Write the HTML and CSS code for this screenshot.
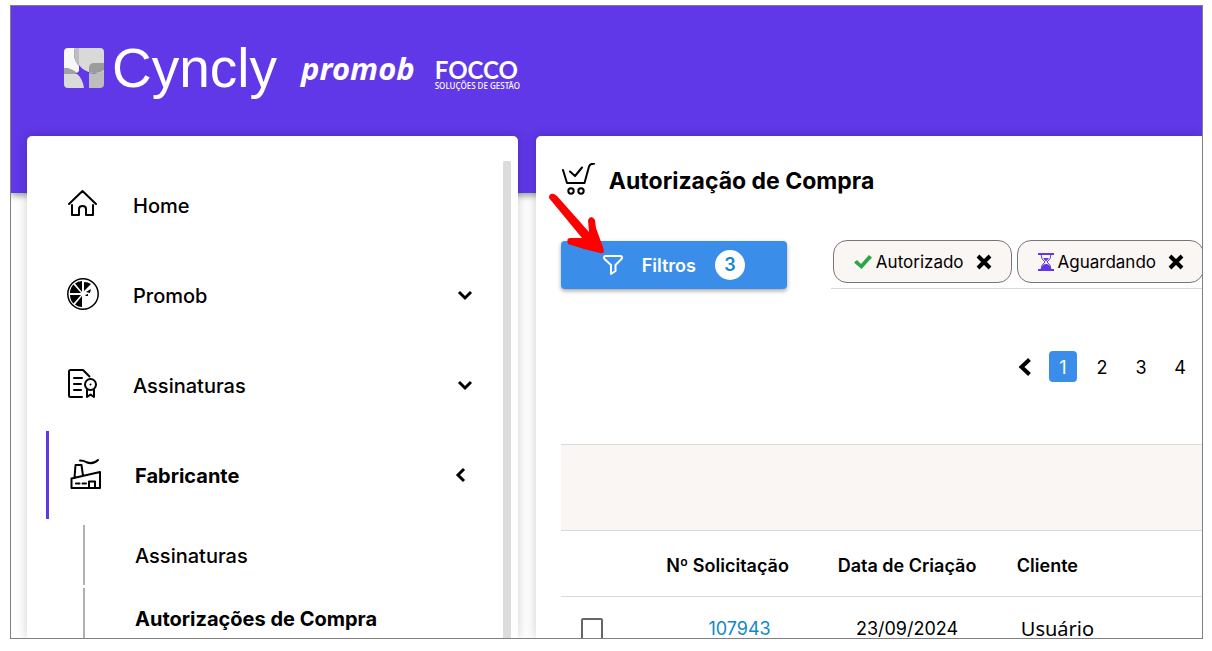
FILE: index.html
```html
<!DOCTYPE html>
<html lang="pt-BR">
<head>
  <title>Autorização de Compra</title>
  <meta charset="UTF-8">
  <link rel="stylesheet" href="styles.css">
</head>
<body>
  <div class="frame">
    <header class="header">
      <a class="brand" href="#">
        <svg class="brand-mark" viewBox="0 0 40 40" aria-hidden="true">
          <defs><clipPath id="mark"><rect width="40" height="40" rx="4"/></clipPath></defs>
          <g clip-path="url(#mark)">
            <path d="M0 0h11c-2 6-1 12 4 18v5l-2 2C9 22 5 20 0 20z" fill="#f7f7f7"/>
            <path d="M11 0h4v18C10 13 9 6 11 0z" fill="#bdbdbd"/>
            <path d="M15 0h25v25H27C21 23 17 20 15 17z" fill="#d9d9d9"/>
            <path d="M25 24v-4c0-3 2-5 5-5h10v7c-4 3-10 4-15 2z" fill="#9b9b9b"/>
            <path d="M25 25c5 1 11 0 15-2v17H25z" fill="#bdbdbd"/>
            <path d="M0 20c5 0 10 2 13 5l-2 1H0z" fill="#a3a3a3"/>
            <path d="M0 26h13c4 3 6 8 7 14H0z" fill="#dadada"/>
          </g>
        </svg>
        <span class="brand-cyncly">Cyncly</span>
      </a>
      <span class="brand-promob">promob</span>
      <span class="brand-focco">
        <span class="focco-name">FOCCO</span>
        <span class="focco-sub">SOLUÇÕES DE GESTÃO</span>
      </span>
    </header>

    <div class="content">
      <aside class="card sidebar">
        <nav class="menu">
          <a class="menu-item" href="#">
            <svg class="menu-icon" viewBox="0 0 32 32"><path d="M2 16 15.500 3 29 16M5 17v10h7v-6q0-3 3.500-3t3.500 3v6h7V17"/></svg>
            <span class="menu-label">Home</span>
          </a>
          <a class="menu-item" href="#">
            <svg class="menu-icon" viewBox="0 0 32 32">
              <circle class="thin" cx="16" cy="16" r="15.200"/>
              <g class="solid">
                <path d="M15 14V3q-4 0-7 2.500zM6.500 6.500 14 15H3q0-5 3.500-8.500zM3 17h11l-7.500 8.500Q3 22 3 17zM8 26.500 15 18v11q-4 0-7-2.500zM17 13V4q4 0 7 2zM19 14l5-3-1 4zM18 17l3-1v2h-2z"/>
              </g>
            </svg>
            <span class="menu-label">Promob</span>
            <svg class="chevron" viewBox="0 0 16 16"><path d="m2 5 6 6 6-6"/></svg>
          </a>
          <a class="menu-item" href="#">
            <svg class="menu-icon" viewBox="0 0 32 32">
              <path d="M15 29H3.500Q2 29 2 27.500v-24Q2 2 3.500 2H16l6.500 6.500M7 10h8M7 16h7M7 22h7"/>
              <circle cx="23.500" cy="16.500" r="5.500"/>
              <path d="M20 21.500V29l3.500-2.500L27 29v-7.500"/>
              <circle class="solid" cx="23.500" cy="16.500" r="1"/>
            </svg>
            <span class="menu-label">Assinaturas</span>
            <svg class="chevron" viewBox="0 0 16 16"><path d="m2 5 6 6 6-6"/></svg>
          </a>
          <a class="menu-item active" href="#">
            <svg class="menu-icon" viewBox="0 0 32 32">
              <path d="M2.500 30V20.500L31 14v16zM5.500 20l1-13h6l1.500 11M11 2.500q4 0 6 1.500 7 3 12-2M7 25.500h3.500M13.500 25.500H17M20 30v-6.500h6V30"/>
            </svg>
            <span class="menu-label">Fabricante</span>
            <svg class="chevron" viewBox="0 0 16 16"><path d="M11 2 5 8l6 6"/></svg>
          </a>
          <div class="submenu">
            <a class="submenu-item" href="#">Assinaturas</a>
            <a class="submenu-item current" href="#">Autorizações de Compra</a>
          </div>
        </nav>
        <div class="scrollbar"></div>
      </aside>

      <main class="card main">
        <div class="title">
          <svg class="title-icon" viewBox="0 0 34 34" aria-hidden="true">
            <path d="M2 7l4 13h17.500L28 3.500q.800-3 5-2.800M9 8.500l5 4.500 7-8.500"/>
            <circle cx="10" cy="28" r="2.700"/><circle cx="20" cy="28" r="2.700"/>
          </svg>
          <h1>Autorização de Compra</h1>
        </div>

        <div class="filters">
          <button class="btn-filter" type="button">
            <svg class="funnel" viewBox="0 0 20 20"><path d="M1 2.500Q1 1 2.500 1h15Q19 1 19 2.500q0 1-1 2L12.500 10v6L8 19v-9L2 4.500q-1-1-1-2z"/></svg>
            <span>Filtros</span>
            <span class="count">3</span>
            <svg class="arrow" viewBox="0 0 58 66" aria-hidden="true">
              <path d="M1 5Q1 0 6 1L9 3 41 39l-1-12q3-6 7 0l1 8 8 22q0 4-4 3l-16-4-16-5q-2-6 2-6l12 0z"/>
            </svg>
          </button>
          <div class="chips">
            <span class="chip">
              <svg class="chip-check" viewBox="0 0 18 14"><path d="M0 7.500 3 5l4 4L15 0l3 2.500L7.500 14z"/></svg>
              Autorizado
              <button class="chip-close" type="button" aria-label="Remover Autorizado"><svg viewBox="0 0 16 16"><path d="m2 2 12 12M14 2 2 14"/></svg></button>
            </span>
            <span class="chip">
              <svg class="chip-glass" viewBox="0 0 16 18"><path class="glass" d="M3 1.500q0 5 4 7.500-4 2.500-4 7.500M13 1.500q0 5-4 7.500 4 2.500 4 7.500"/><path d="M0 0h16v2H0zM0 16h16v2H0zM5 5h6L8 8.500zM3 16q1-5 5-5t5 5z"/></svg>
              Aguardando
              <button class="chip-close" type="button" aria-label="Remover Aguardando"><svg viewBox="0 0 16 16"><path d="m2 2 12 12M14 2 2 14"/></svg></button>
            </span>
          </div>
        </div>

        <nav class="pagination">
          <a class="page-prev" href="#" aria-label="Anterior"><svg viewBox="0 0 14 20"><path d="m11.500 2.500-8 7.500 8 7.500"/></svg></a>
          <a class="page selected" href="#">1</a>
          <a class="page" href="#">2</a>
          <a class="page" href="#">3</a>
          <a class="page" href="#">4</a>
        </nav>

        <div class="band"></div>
        <table class="orders">
          <thead>
            <tr>
              <th class="col-check"></th>
              <th class="col-number">Nº Solicitação</th>
              <th class="col-date">Data de Criação</th>
              <th class="col-client">Cliente</th>
            </tr>
          </thead>
          <tbody>
            <tr>
              <td class="col-check"><input type="checkbox" aria-label="Selecionar 107943"></td>
              <td class="number"><a href="#">107943</a></td>
              <td>23/09/2024</td>
              <td class="col-client user">Usuário</td>
            </tr>
          </tbody>
        </table>
      </main>
    </div>
  </div>
</body>
</html>
```
FILE: styles.css
```css
:root {
  --purple: #6038e8;
  --blue: #3a8eea;
  --link: #1287c9;
  --beige: #faf6f4;
  --line: #d9d9d9;
}
* { box-sizing: border-box; }
body {
  margin: 0;
  padding: 5px 9px 12px 10px;
  height: 100vh;
  background: #fff;
  color: #000;
  font-family: Inter, "Liberation Sans", sans-serif;
  font-size: 20px;
}
a { color: inherit; text-decoration: none; }
svg { flex: none; fill: none; stroke: currentColor; stroke-width: 2; stroke-linejoin: round; stroke-linecap: round; }
.solid { fill: currentColor; stroke: none; }
.thin { stroke-width: 1.5; }

.frame { height: 100%; border: 1px solid #808080; overflow: hidden; display: flex; flex-direction: column; }

/* Header */
.header { flex: none; height: 187px; padding: 34px 53px; background: var(--purple); color: #fff; display: flex; align-items: flex-start; box-shadow: 0 3px 6px rgba(0, 0, 0, 0.35); }
.brand { display: flex; align-items: center; gap: 8px; }
.brand-mark { width: 40px; height: 40px; stroke: none; }
.brand-cyncly { font: 55px/56px "Liberation Sans", Arial, sans-serif; }
.brand-promob { margin: 4px 0 0 24px; font: italic bold 31px/48px "Noto Sans", sans-serif; }
.brand-focco { margin: 18px 0 0 20px; display: flex; flex-direction: column; font-family: Lato, sans-serif; }
.focco-name { font-size: 24px; font-weight: 700; line-height: 24px; }
.focco-sub { font: 500 8px/8px "Noto Sans", sans-serif; }

/* Layout */
.content { flex: 1; min-height: 0; margin-top: -57px; padding-left: 16px; display: grid; grid-template-columns: minmax(0, 14fr) minmax(0, 19fr); grid-template-rows: minmax(0, 1fr); gap: 18px; }
.card { background: #fff; border-radius: 5px 5px 0 0; box-shadow: 0 0 12px rgba(0, 0, 0, 0.2); overflow: hidden; }

/* Sidebar */
.sidebar { display: flex; padding: 25px 7px 0 19px; }
.menu { flex: 1; }
.scrollbar { width: 8px; background: #dcdcdc; border-radius: 2px 2px 0 0; }
.menu-item { display: flex; align-items: center; height: 88px; margin-bottom: 2px; padding: 0 30px 0 18px; gap: 34px; border-left: 3px solid transparent; font-weight: 500; }
.menu-item.active { padding: 0 34px 0 20px; border-color: var(--purple); font-weight: 700; }
.menu-icon { width: 32px; height: 32px; margin-bottom: 2px; }
.menu-label { flex: 1; padding-top: 2px; }
.chevron { width: 16px; height: 16px; stroke-width: 3; stroke-linecap: butt; stroke-linejoin: miter; }
.submenu { display: flex; flex-direction: column; gap: 3px; padding: 4px 0 0 37px; }
.submenu-item { height: 60px; padding-left: 50px; border-left: 2px solid #b0b0b0; font-weight: 500; line-height: 62px; }
.submenu-item.current { font-weight: 700; }

/* Main */
.main { border-radius: 5px 0 0 0; padding: 25px 0 0 25px; }
.title { display: flex; align-items: center; gap: 14px; height: 40px; }
.title-icon { width: 34px; height: 34px; margin-bottom: 2px; }
h1 { margin: 0; font-size: 23px; font-weight: 700; white-space: nowrap; }
.filters { display: flex; align-items: flex-start; gap: 44px; margin-top: 39px; }
.btn-filter { position: relative; flex: none; display: flex; align-items: center; justify-content: center; gap: 19px; width: 226px; height: 48px; margin-top: 1px; padding: 0; border: 0; border-radius: 4px; background: var(--blue); color: #fff; font: 600 18px Inter, sans-serif; box-shadow: 0 2px 4px rgba(0, 0, 0, 0.35); cursor: pointer; }
.funnel { width: 20px; height: 20px; }
.count { width: 30px; height: 30px; border-radius: 50%; background: #fff; color: var(--link); line-height: 30px; }
.arrow { position: absolute; left: -13px; top: -48px; width: 58px; height: 66px; fill: red; stroke: none; }
.chips { flex: 1; display: flex; gap: 5px; padding: 0 0 5px 2px; border-bottom: 1px solid var(--line); }
.chip { flex: none; display: flex; align-items: center; height: 43px; padding: 0 19px 0 20px; gap: 4px; border: 1px solid #7b737c; border-radius: 14px; background: var(--beige); font-size: 17px; }
.chip svg { fill: currentColor; stroke: none; }
.chip-check { width: 18px; height: 14px; color: #28a745; }
.chip-glass { width: 16px; height: 18px; color: var(--purple); }
.chip .chip-glass .glass { fill: none; stroke: currentColor; stroke-width: 1; }
.chip-close { display: flex; margin-left: 8px; padding: 0; border: 0; background: none; color: #000; cursor: pointer; }
.chip .chip-close svg { width: 16px; height: 16px; stroke: currentColor; stroke-width: 4; stroke-linecap: butt; }
.pagination { display: flex; align-items: center; justify-content: flex-end; gap: 11px; height: 31px; margin: 62px 8px 62px 0; font-size: 18px; }
.page { width: 28px; height: 31px; border-radius: 4px; line-height: 33px; text-align: center; }
.page.selected { background: var(--blue); color: #fff; }
.page-prev { display: flex; margin-right: 6px; }
.page-prev svg { width: 14px; height: 20px; stroke-width: 4; stroke-linecap: butt; stroke-linejoin: miter; }

/* Orders */
.band { height: 87px; background: var(--beige); border: solid var(--line); border-width: 1px 0; }
.orders { width: 100%; table-layout: fixed; border-collapse: collapse; font-size: 18px; text-align: center; white-space: nowrap; }
th, td { height: 65px; padding: 0; border-bottom: 1px solid var(--line); }
th { padding-top: 4px; font-weight: 600; }
.col-check { width: 12%; padding-left: 20px; text-align: left; }
.col-number, .col-date { width: 28%; }
.number { padding-left: 24px; }
.col-client { padding-left: 20px; text-align: left; }
.user { padding-left: 24px; font-family: "Noto Sans", sans-serif; font-size: 20px; }
.orders a { color: var(--link); }
input[type="checkbox"] { appearance: none; display: block; width: 22px; height: 22px; margin: 0; border: 2px solid #666; border-radius: 2px; background: #fff; }
```
